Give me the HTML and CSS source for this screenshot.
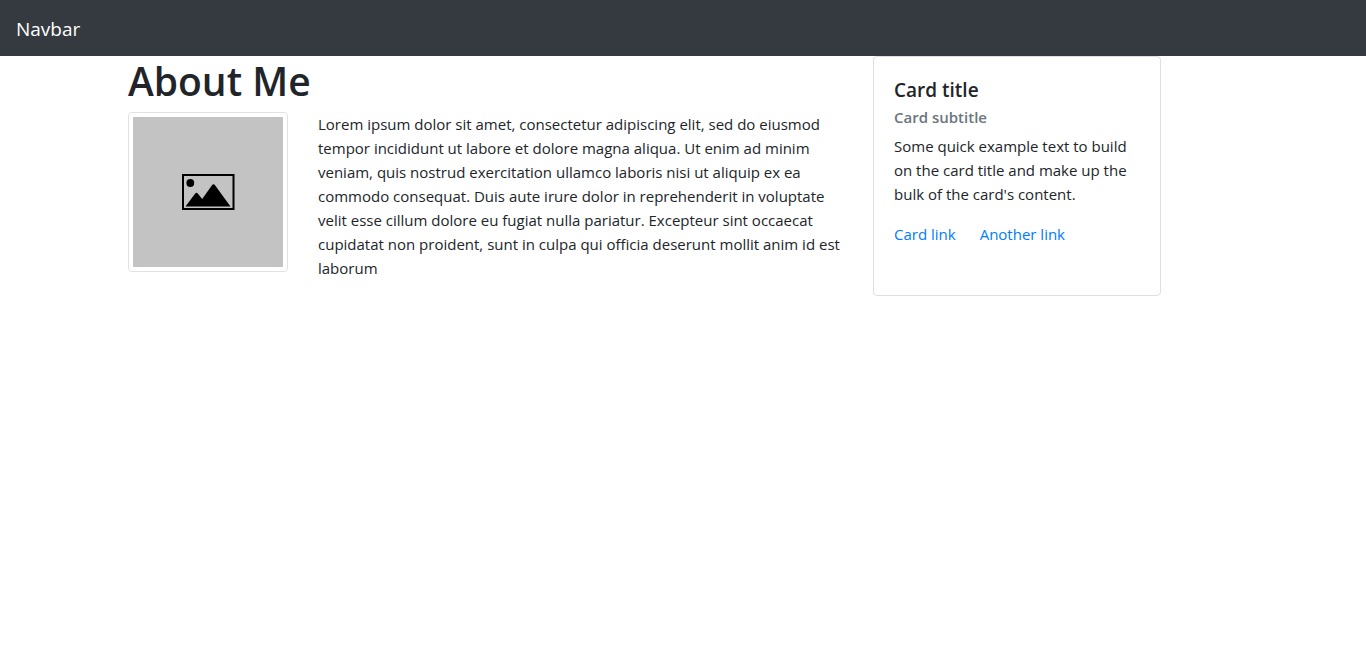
FILE: index.html
```html
<!DOCTYPE html>
<html lang="en">
<head>
<meta charset="utf-8">
<meta name="viewport" content="width=device-width, initial-scale=1">
<title>About Me</title>
<link rel="stylesheet" href="styles.css">
</head>
<body>
<nav class="navbar"><a class="navbar-brand" href="#">Navbar</a></nav>
<main class="container">
  <section class="about">
    <h1 class="about-title">About Me</h1>
    <div class="about-body">
      <div class="thumbnail">
        <svg class="placeholder" viewBox="0 0 150 150" role="img" aria-label="Profile picture">
          <rect width="150" height="150" fill="#c3c3c3"/>
          <rect x="50" y="58" width="50.5" height="34" fill="none" stroke="#000" stroke-width="2"/>
          <circle cx="57.3" cy="66" r="3.9"/>
          <path d="M52.5 89.500 L62 76.700 Q63.500 74.700 65 76.700 L69.200 82 L78.800 68.500 Q80.500 66.200 82.200 68.500 L97.500 89.500 Z"/>
        </svg>
      </div>
      <p class="about-text">Lorem ipsum dolor sit amet, consectetur adipiscing elit, sed do eiusmod tempor incididunt ut labore et dolore magna aliqua. Ut enim ad minim veniam, quis nostrud exercitation ullamco laboris nisi ut aliquip ex ea commodo consequat. Duis aute irure dolor in reprehenderit in voluptate velit esse cillum dolore eu fugiat nulla pariatur. Excepteur sint occaecat cupidatat non proident, sunt in culpa qui officia deserunt mollit anim id est laborum</p>
    </div>
  </section>
  <aside class="card">
    <h5 class="card-title">Card title</h5>
    <h6 class="card-subtitle">Card subtitle</h6>
    <p class="card-text">Some quick example text to build on the card title and make up the bulk of the card's content.</p>
    <div class="card-links">
      <a class="card-link" href="#">Card link</a>
      <a class="card-link" href="#">Another link</a>
    </div>
  </aside>
</main>
</body>
</html>
```
FILE: styles.css
```css
*, *::before, *::after { box-sizing: border-box; }
body {
  margin: 0;
  background: #fff;
  color: #212529;
  font-family: "Segoe UI", "Open Sans", "Noto Sans", sans-serif;
  font-size: 15px;
  line-height: 24px;
}
h1, h5, h6, p { margin: 0; }
a { text-decoration: none; }
.navbar {
  display: flex;
  align-items: center;
  padding: 14px 16px 12px;
  background: #343a40;
}
.navbar-brand { color: #fff; font-size: 19px; line-height: 30px; }
.container {
  display: flex;
  width: 100%;
  max-width: 1140px;
  margin: 0 auto;
}
.about { flex: 0 0 66.6667%; padding: 0 15px; }
.about-title {
  margin-bottom: 6px;
  font-size: 39px;
  font-weight: 600;
  line-height: 50px;
}
.about-body { display: flex; align-items: flex-start; gap: 30px; }
.thumbnail {
  flex: none;
  padding: 4px;
  border: 1px solid #dee2e6;
  border-radius: 4px;
}
.placeholder { display: block; width: 150px; height: 150px; }
.about-text { flex: 1; margin-bottom: 16px; padding-right: 12px; }
.card {
  flex: 0 1 288px;
  padding: 20px;
  border: 1px solid #dfdfdf;
  border-radius: 4px;
}
.card-title {
  margin-bottom: 2px;
  font-size: 19px;
  font-weight: 600;
  line-height: 26px;
}
.card-subtitle {
  margin-bottom: 5px;
  color: #6c757d;
  font-size: 15px;
  font-weight: 600;
  line-height: 24px;
}
.card-text { margin-bottom: 16px; }
.card-links { display: flex; gap: 24px; }
.card-link { color: #007bff; }
```
